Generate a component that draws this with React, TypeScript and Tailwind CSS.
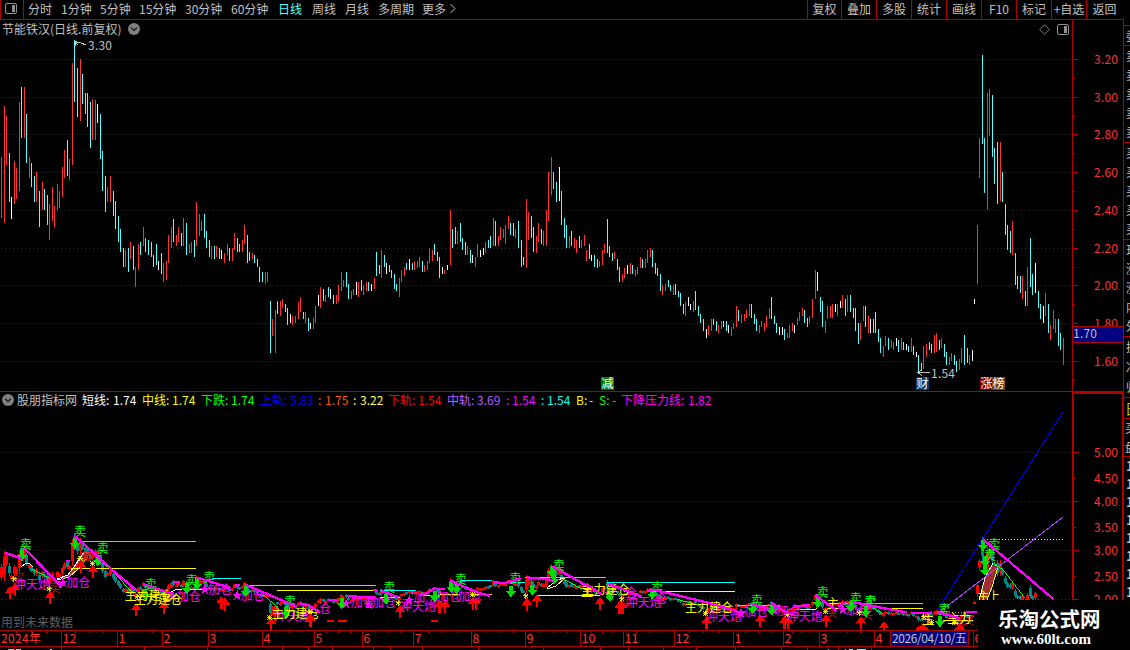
import React from "react";

type Tone = "r" | "c" | "w";
type Bar = { x: number; top: number; bottom: number; tone: Tone };

/* Each record is "x top bottom tone", in thirds of a pixel from the block's origin. */
function readBars(originX: number, originY: number, source: string): Bar[] {
  return source
    .trim()
    .split(",")
    .map((record) => {
      const [x, top, bottom, tone] = record.trim().split(/\s+/);
      return {
        x: originX + Math.floor(Number(x) / 3),
        top: originY + Math.round(Number(top) / 3),
        bottom: originY + Math.round(Number(bottom) / 3),
        tone: tone as Tone,
      };
    });
}

const bars: Bar[] = [
  ...readBars(
    0,
    0,
    `4 471 653 r,13 318 668 r,19 348 495 r,28 459 606 c,34 591 657 w,43 483 612 r,49 504 597 r,58 306 573 r,64 261 414 c,73 261 414 r,79 342 489 c,88 471 534 r,94 489 561 c,103 528 606 c,109 516 606 r,118 573 681 c,127 546 630 r,133 567 630 c,142 585 675 c,148 612 720 r,157 561 662 r,163 618 681 r,172 552 630 r,178 573 624 r,187 501 591 r,193 450 534 r,202 420 528 c,208 477 540 r,217 189 495 r,223 120 306 c,232 204 351 c,241 177 363 r,247 222 312 c,256 279 342 c,262 279 381 c,271 306 444 c,277 297 420 r,286 300 420 r,292 312 369 w,301 342 477 c,307 453 573 c,316 528 636 c,322 561 606 r,331 528 606 r,340 573 648 c,346 603 687 c,355 648 726 c`
  ),
  ...readBars(
    0,
    190,
    `361 117 186 c,370 174 231 c,376 180 231 r,385 174 246 c,391 156 207 r,400 168 240 c,406 231 291 r,415 162 240 r,421 156 195 c,430 111 168 r,436 144 186 c,445 150 195 c,454 156 201 c,460 195 231 c,469 162 225 c,475 213 240 w,484 189 252 c,490 219 276 r,499 213 270 r,505 135 219 r,514 110 174 r,520 87 156 c,529 135 168 r,535 111 156 r,544 129 168 c,550 84 168 r,559 99 195 c,568 162 189 r,574 156 189 r,583 150 201 c,589 36 168 r,598 72 138 r,604 93 123 r,613 72 144 c,619 123 174 c,628 150 201 c,634 168 207 r,643 168 207 c,649 168 201 r,658 174 207 c,664 180 207 w,673 189 219 r,682 162 195 r,688 174 213 c,697 174 213 r,703 129 180 r,712 144 186 c,718 162 186 c,727 150 186 r,733 105 162 r,742 135 219 c,748 186 213 c,757 189 207 r,763 195 219 c,772 207 231 c,778 231 276 c,787 246 276 c,796 246 282 r,802 246 276 r,811 333 489 c,817 387 438 r,826 360 489 r,832 333 372 c,841 333 378 r,847 327 354 r,856 342 366 c,862 354 405 c,871 372 399 w,877 378 405 r,886 378 399 r,895 336 387 r,901 321 366 r,910 366 387 c,916 366 399 r,925 384 423 c,931 399 417 w,940 384 417 r,946 348 399 r,955 315 348 w,961 291 354 r,970 297 333 c,976 315 336 r,985 291 321 c,991 297 327 w,1000 315 342 c,1009 315 342 r,1015 285 336 r,1024 246 303 r,1030 270 291 r,1039 246 291 c,1045 282 327 c,1054 303 327 r,1060 297 315 r,1069 276 315 w,1075 276 321 r,1084 270 303 c,1090 285 315 r,1099 276 303 r,1105 276 303 c`
  ),
  ...readBars(
    370,
    190,
    `4 282 303 w,13 264 297 r,19 186 258 c,28 225 252 c,34 180 264 r,43 195 231 c,49 219 252 w,58 225 246 c,64 240 264 c,73 252 297 c,79 282 303 c,88 264 321 r,94 240 276 r,103 231 258 r,109 219 240 c,118 207 240 w,127 219 240 c,133 213 240 r,142 213 234 r,148 201 231 r,157 213 246 c,163 225 246 r,172 213 240 r,178 174 219 r,187 180 213 r,193 162 195 c,202 186 213 c,208 201 264 c,217 231 252 w,223 240 252 r,232 225 240 w,241 60 225 r,247 117 174 c,256 111 162 c,262 123 162 r,271 99 156 c,277 144 180 c,286 156 195 c,292 168 195 r,301 180 219 c,307 195 219 w,316 201 231 r,322 162 201 r,331 180 201 w,340 174 195 w,346 156 189 r,355 150 174 c,361 138 174 c,370 84 168 r,376 93 168 c,385 138 168 r,391 111 150 r,400 117 144 r,406 105 162 r,415 78 117 r,421 99 135 c,430 99 138 c,436 117 144 r,445 93 174 c,454 150 231 c,460 201 225 c,469 27 234 r,475 66 150 r,484 78 144 c,490 111 186 c,499 138 189 r,505 99 156 r,514 117 162 c,520 123 168 r,529 60 168 r,535 -54 93 r,544 -99 15 r,550 -54 -3 c,559 -24 36 c,568 -69 33 w,574 3 105 c,583 84 144 c,589 105 174 c,598 138 174 r,604 123 168 c,613 144 174 r,619 150 189 r,628 138 174 c,634 150 174 r,643 135 168 r,649 180 213 r,658 162 207 c,664 195 213 w,673 195 231 c,682 207 234 c,688 213 231 r,697 180 225 r,703 162 189 r,712 87 189 c,718 168 201 c,727 189 213 c,733 186 207 r,742 207 240 c,748 231 276 c,757 252 276 r,763 234 264 r,772 225 252 w,781 219 252 r,787 225 252 c,796 240 258 r,802 231 252 r,811 201 234 r,817 207 234 c,826 207 234 r,832 180 219 r,841 174 201 r,847 180 231 c,856 219 252 c,862 234 258 c,871 252 303 c,877 285 315 r,886 282 303 r,895 270 291 c,901 285 303 c,910 285 315 r,916 282 315 c,925 303 321 c,931 309 348 c,940 342 372 c,946 336 378 r,955 321 348 w,961 342 360 w,970 333 366 r,976 303 360 c,985 348 378 c,991 372 399 c,1000 387 423 c,1009 417 444 w,1015 405 435 r,1024 387 423 r,1030 387 405 c,1039 393 423 c,1045 405 429 r,1054 393 417 r,1060 393 411 c,1069 393 423 c,1075 405 429 w,1084 411 438 r,1090 399 417 r,1099 348 411 r,1105 360 393 c,1114 372 399 r,1123 372 393 r,1129 360 384 r,1138 342 378 r`
  ),
  ...readBars(
    750,
    190,
    `4 342 384 c,13 372 402 c,19 387 423 c,28 405 429 r,34 393 411 r,43 399 423 r,49 378 411 r,58 354 387 r,64 321 387 c,73 378 402 c,79 399 429 c,88 411 435 w,97 411 435 w,103 417 450 c,112 429 444 r,118 405 444 r,127 399 423 r,133 405 429 w,142 384 405 r,148 366 393 r,157 354 378 r,163 360 399 c,172 384 411 c,178 378 399 r,187 327 384 r,196 240 327 r,202 246 303 w,211 321 366 c,217 333 411 c,226 393 429 r,232 348 387 r,241 348 384 r,247 342 384 r,256 342 366 w,262 342 378 r,271 333 354 w,277 315 354 r,286 327 378 c,292 315 366 r,301 315 366 c,310 354 384 c,316 354 423 c,325 399 462 c,331 399 450 r,340 348 393 r,346 348 411 c,355 378 429 r,361 387 429 w,370 387 429 c,376 366 429 c,385 417 456 c,391 444 489 c,400 468 501 r,406 438 468 r,415 444 480 c,424 450 474 r,430 456 480 r,439 444 468 w,445 450 486 c,454 444 480 r,460 456 480 c,469 462 480 w,475 468 486 c,484 444 486 r,490 468 495 c,499 486 501 w,505 495 549 c,514 519 543 c,520 468 537 r,529 462 501 r,538 456 480 c,544 462 489 c,553 435 489 r,559 429 486 r,568 450 480 c,574 444 474 r,583 462 501 c,589 486 525 c,598 501 525 r,604 489 513 r,613 495 525 c,619 513 546 c,628 507 540 r,634 474 519 r,643 435 525 c,652 474 519 c,658 495 525 r,667 480 513 w,673 327 342 w,682 105 282 r,688 -156 -36 r,697 -405 -138 c,703 -156 9 c,712 -291 60 r,718 -303 -162 r,727 -285 -99 c,733 -126 -18 c,742 -144 42 c,751 -144 33 r,757 -54 36 c,766 42 135 c,772 105 180 c,781 123 189 c,787 93 195 r,796 189 285 c,802 258 297 c,811 258 309 c,817 258 327 r,826 303 348 c,832 231 348 r,841 144 291 c,847 252 315 c,856 219 309 w,865 303 354 c,871 342 387 c,880 348 399 w,886 309 378 r,895 342 429 c,901 405 450 r,910 360 417 r,916 387 429 r,925 387 468 c,931 429 480 c,940 444 525 r`
  ),
];

const barColor: Record<Tone, string> = { r: "#ff3232", c: "#54ffff", w: "#ffffff" };
const candleColor: Record<Tone, string> = { r: "#ff0000", c: "#008888", w: "#ff0000" };

/* The indicator pane draws the same prices on its own, flatter scale. */
const toIndicatorY = (y: number) => 538.5 + (y - 59.5) * 0.262;

const LINE = "#b00000";
const MAGENTA = "#ff00ff";
const YELLOW = "#ffff00";
const CYAN = "#00ffff";
const GREEN = "#00ff00";

const upperGrid = [59, 97, 134, 172, 210, 248, 285, 323, 361];
const upperLabels = ["3.20", "3.00", "2.80", "2.60", "2.40", "2.20", "2.00", "1.80", "1.60"];
const lowerGrid = [452, 501, 550, 599];
const lowerLabels: [string, number][] = [
  ["5.00", 452],
  ["4.50", 478],
  ["4.00", 501],
  ["3.50", 527],
  ["3.00", 550],
  ["2.50", 576],
  ["2.00", 599],
];

type Mark = [string, number, number];
type Segment = {
  originX: number;
  magenta: string[];
  cyan: string[];
  yellow: string[];
  green?: string[];
  sell: [number, number][];
  down: [number, number][];
  up: [number, number][];
  buy?: [number, number][];
  sparks?: [number, number][];
  stars?: [number, number][];
  pink: Mark[];
  gold: Mark[];
};

const segments: Segment[] = [
  {
    originX: 0,
    magenta: ["14,113 66,131", "74,100 186,218", "200,140 209,137", "224,62 340,168 412,228", "432,208 520,237", "520,202 540,200", "592,188 690,218", "705,212 720,210", "734,208 890,275"],
    cyan: ["246,79 588,79", "636,190 723,190", "735,211 900,211"],
    yellow: ["214,160 588,160", "560,223 610,223", "830,226 900,226"],
    green: ["96,162 150,190", "290,135 330,160 390,225", "790,240 835,278"],
    sell: [[77, 90], [240, 50], [308, 103], [452, 210], [575, 198], [628, 188], [870, 260]],
    down: [[66, 122], [225, 86], [293, 136], [436, 238], [560, 220], [592, 208], [737, 230], [857, 292]],
    up: [[30, 215], [45, 205], [150, 230], [243, 138], [279, 152], [408, 266], [492, 260], [664, 246], [675, 250], [813, 309], [825, 282]],
    buy: [[55, 192], [165, 222], [260, 128]],
    sparks: [[42, 192], [148, 222], [240, 130], [277, 145], [414, 244], [808, 308]],
    stars: [[188, 202], [519, 243], [614, 222], [712, 240]],
    pink: [["冲天炮", 42, 210], ["加仓", 199, 203], ["加仓", 530, 245], ["加仓", 625, 224], ["加仓", 722, 242], ["冲天炮", 825, 306]],
    gold: [["主力建仓", 374, 242], ["主力建仓", 402, 256], ["主力建仓", 815, 296]],
  },
  {
    originX: 290,
    magenta: ["30,265 55,270 90,292", "115,255 145,255", "170,243 250,248", "250,225 262,224", "275,228 325,247", "362,231 372,230", "388,242 410,235 430,222 465,222", "480,197 570,235 600,242", "610,202 645,204 692,190", "710,187 790,195", "787,155 830,178 900,218"],
    cyan: ["0,211 258,211", "270,226 378,226", "510,196 606,196", "610,202 705,202", "705,187 900,187"],
    yellow: ["0,226 260,226", "270,247 330,247", "390,242 510,238", "555,238 606,238", "740,241 900,241"],
    green: ["820,192 845,205 875,222"],
    sell: [[298, 218], [512, 196], [676, 192], [806, 152]],
    down: [[155, 265], [288, 252], [484, 217], [500, 220], [663, 230], [727, 225], [786, 170], [793, 192], [435, 245]],
    up: [[62, 298], [330, 272], [449, 256], [465, 256], [549, 248], [558, 248], [711, 250], [741, 240]],
    buy: [[340, 268], [720, 208]],
    sparks: [[325, 264], [548, 238], [707, 243], [60, 290]],
    stars: [[168, 265], [236, 267], [358, 255], [432, 243]],
    pink: [["仓", 88, 283], ["加仓", 182, 264], ["加仓", 246, 264], ["冲天炮", 330, 275], ["加", 370, 250], ["加仓", 440, 245], ["加仓", 505, 245]],
    gold: [["主", 873, 232]],
  },
  {
    originX: 580,
    magenta: ["0,203 30,215 65,238", "82,205 185,245", "200,228 225,225 380,262 470,288", "515,268 570,282", "573,262 610,288 640,300", "640,275 690,270", "706,240 770,288", "775,275 795,262", "820,262 900,277"],
    cyan: ["0,187 78,187", "80,202 465,202", "470,271 600,271", "735,265 900,265"],
    yellow: ["0,241 60,241", "215,229 465,229", "640,284 710,282"],
    green: ["290,252 350,270"],
    sell: [[232, 218], [530, 257], [728, 234], [827, 252], [872, 262]],
    down: [[90, 243], [217, 237], [518, 280], [575, 285], [713, 262], [812, 275], [858, 290]],
    up: [[60, 248], [119, 260], [127, 260], [380, 305], [540, 300], [614, 304], [624, 304], [738, 300], [843, 305]],
    buy: [[140, 262], [755, 292], [862, 298]],
    sparks: [[125, 252], [376, 296], [622, 298], [736, 290], [838, 294]],
    stars: [[88, 235], [483, 293], [583, 285], [788, 282]],
    pink: [["冲天炮", 137, 265], ["仓", 135, 235], ["仓", 226, 252], ["冲天炮", 378, 307], ["加仓", 493, 291], ["加仓", 590, 288], ["冲天炮", 620, 307], ["加仓", 798, 285]],
    gold: [["主力建仓", 5, 225], ["主力建仓", 315, 278], ["主", 740, 268]],
  },
  {
    originX: 860,
    magenta: ["0,266 35,273 140,292", "155,294 215,293", "232,291 300,310", "318,291 352,291", "368,72 580,252"],
    cyan: ["15,265 189,265", "260,301 340,301"],
    yellow: ["60,281 189,281", "250,318 340,318"],
    green: ["400,145 430,165 495,250", "40,280 70,296"],
    sell: [[30, 262], [253, 286], [403, 90], [390, 122]],
    down: [[369, 92], [375, 166], [375, 140], [240, 320]],
    up: [[72, 320], [190, 325], [176, 334], [300, 325], [292, 334]],
    buy: [[205, 318], [300, 318], [325, 316]],
    sparks: [[192, 306], [215, 322], [285, 322]],
    stars: [],
    pink: [],
    gold: [["主", 186, 316], ["主力", 262, 312], ["主", 352, 246], ["上", 384, 246]],
  },
];

function Overlay({ segment }: { segment: Segment }) {
  const { originX } = segment;
  return (
    <g transform={`translate(${originX} 515) scale(0.33333)`} fontSize="36">
      {segment.cyan.map((p) => (
        <polyline key={p} points={p} fill="none" stroke={CYAN} strokeWidth="3" />
      ))}
      {segment.yellow.map((p) => (
        <polyline key={p} points={p} fill="none" stroke={YELLOW} strokeWidth="3" />
      ))}
      {(segment.green ?? []).map((p) => (
        <polyline key={p} points={p} fill="none" stroke={GREEN} strokeWidth="3" />
      ))}
      {segment.up.map(([x, y]) => (
        <path key={`${x}-${y}`} d={`M${x} ${y - 2}l16 21h-12v18h-8v-18h-12z`} fill="#ff0000" />
      ))}
      {(segment.buy ?? []).map(([x, y]) => (
        <text key={`${x}-${y}`} x={x - 18} y={y + 13} fill="#e00000">
          买
        </text>
      ))}
      {segment.pink.map(([t, x, y]) => (
        <text key={`${x}-${y}`} x={x} y={y + 12} fill={MAGENTA}>
          {t}
        </text>
      ))}
      {(segment.stars ?? []).map(([x, y]) => (
        <path
          key={`${x}-${y}`}
          d={`M${x} ${y - 15}l4 11h12l-10 8 4 12-10-8-10 8 4-12-10-8h12z`}
          fill={MAGENTA}
        />
      ))}
      {segment.down.map(([x, y]) => (
        <path key={`${x}-${y}`} d={`M${x} ${y + 17}l-15-18h9v-15h12v15h9z`} fill="#00dc00" />
      ))}
      {segment.sell.map(([x, y]) => (
        <text key={`${x}-${y}`} x={x - 18} y={y + 12} fill={GREEN}>
          卖
        </text>
      ))}
      {segment.gold.map(([t, x, y]) => (
        <text key={`${x}-${y}`} x={x} y={y + 12} fill={YELLOW}>
          {t}
        </text>
      ))}
      {(segment.sparks ?? []).map(([x, y]) => (
        <path
          key={`${x}-${y}`}
          d={`M${x - 8} ${y}h16M${x} ${y - 8}v16M${x - 7} ${y - 7}l14 14M${x + 7} ${y - 7}l-14 14`}
          stroke={YELLOW}
          strokeWidth="2.5"
        />
      ))}
      {segment.magenta.map((p) => (
        <polyline key={p} points={p} fill="none" stroke={MAGENTA} strokeWidth="7" />
      ))}
    </g>
  );
}

function RoundChevron() {
  return (
    <svg width="12" height="12" viewBox="0 0 12 12" className="shrink-0">
      <circle cx="6" cy="6" r="6" fill="#808080" />
      <path d="M3 4.5l3 3 3-3" fill="none" stroke="#202020" strokeWidth="1.4" />
    </svg>
  );
}

function PanelIcon() {
  return (
    <svg width="12" height="11" viewBox="0 0 12 11" className="shrink-0">
      <rect x="0.5" y="0.5" width="11" height="10" rx="1.5" fill="none" stroke="#909090" />
      <rect x="7" y="2" width="3" height="7" fill="#909090" />
    </svg>
  );
}

function Toolbar() {
  return (
    <div className="flex h-5 shrink-0 border-b border-[#b00000] text-[#c0c0c0]">
      <div className="flex w-6 items-center border-x border-[#b00000] pb-0.5 pl-1">
        <PanelIcon />
      </div>
      <div className="flex flex-1 items-center pb-0.5 pl-1 whitespace-nowrap">
        <span className="w-[33px]">分时</span>
        <span className="w-[39px]">1分钟</span>
        <span className="w-[39px]">5分钟</span>
        <span className="w-[46px]">15分钟</span>
        <span className="w-[46px]">30分钟</span>
        <span className="w-[47px]">60分钟</span>
        <span className="w-[34px] text-[#54ffff]">日线</span>
        <span className="w-[33px]">周线</span>
        <span className="w-[33px]">月线</span>
        <span className="w-[44px]">多周期</span>
        <span className="w-[28px]">更多</span>
        <svg width="6" height="11" viewBox="0 0 6 11">
          <path d="M.5 1l4.500 4.500-4.500 4.500" fill="none" stroke="#c0c0c0" />
        </svg>
      </div>
      <div className="flex whitespace-nowrap">
        <div className="flex w-[34px] items-center justify-center border-l border-[#b00000] pb-0.5">复权</div>
        <div className="flex w-[35px] items-center justify-center border-l border-[#b00000] pb-0.5">叠加</div>
        <div className="flex w-[35px] items-center justify-center border-l border-[#b00000] pb-0.5">多股</div>
        <div className="flex w-[35px] items-center justify-center border-l border-[#b00000] pb-0.5">统计</div>
        <div className="flex w-[35px] items-center justify-center border-l border-[#b00000] pb-0.5">画线</div>
        <div className="flex w-[35px] items-center justify-center border-l border-[#b00000] pb-0.5">F10</div>
        <div className="flex w-[35px] items-center justify-center border-l border-[#b00000] pb-0.5">标记</div>
        <div className="flex w-[35px] items-center justify-center border-l border-[#b00000] pb-0.5">+自选</div>
        <div className="flex w-[38px] items-center justify-center border-l border-[#b00000] pr-0.5 pb-0.5">返回</div>
      </div>
    </div>
  );
}

function Badge({ x, fill, label }: { x: number; fill: string; label: string }) {
  return (
    <g>
      <rect x={x} y="377" width="13" height="13" fill={fill} />
      <text x={x + 0.5} y="388" fontSize="12" fill="#fff">
        {label}
      </text>
    </g>
  );
}

function PricePane() {
  return (
    <div className="relative h-[371px] shrink-0">
      <svg width="1124" height="371" viewBox="0 20 1124 371" shapeRendering="crispEdges" fontSize="12">
        {upperGrid.map((y) => (
          <line key={y} x1="1" x2="1072" y1={y + 0.5} y2={y + 0.5} stroke="#a00000" strokeDasharray="1 3" />
        ))}
        {bars.map((b, i) => (
          <rect key={i} x={b.x} y={b.top} width="1" height={b.bottom - b.top} fill={barColor[b.tone]} />
        ))}
        <path d="M1072.5 20V391M1123.5 20V391" stroke={LINE} />
        {upperGrid.map((y, i) => (
          <g key={y}>
            <path d={`M1073 ${y + 0.5}h5M1073 ${y + 19.5}h2`} stroke={LINE} />
            <text x="1094" y={y + 5} fill="#ff3232" textLength="24">
              {upperLabels[i]}
            </text>
          </g>
        ))}
        <rect x="1073" y="326" width="50" height="17" fill="#000080" />
        <path d="M1072 326.5h51M1072 342.5h51" stroke={LINE} />
        <text x="1073" y="338" fill="#c0c0c0" textLength="24">
          1.70
        </text>
        <path d="M75 46V41.5H77M76 42l5 1 5 2M75 42l3 3" fill="none" stroke="#c0c0c0" />
        <text x="88" y="50" fill="#c0c0c0" textLength="24">
          3.30
        </text>
        <path d="M918 372.5H930M922 369l-4 3.500 4 3.500" fill="none" stroke="#c0c0c0" />
        <text x="931" y="378" fill="#c0c0c0" textLength="24">
          1.54
        </text>
        <Badge x={601} fill="#008000" label="减" />
        <Badge x={916} fill="#003c78" label="财" />
        <Badge x={980} fill="#800000" label="涨" />
        <Badge x={992} fill="#804000" label="榜" />
      </svg>
      <div className="absolute inset-x-0 top-0 flex h-[18px] items-center pl-0.5 text-[#c0c0c0]">
        <span className="w-[126px] whitespace-nowrap">节能铁汉(日线.前复权)</span>
        <RoundChevron />
        <div className="flex flex-1 items-center justify-end gap-[7px] pr-[55px]">
          <svg width="11" height="11" viewBox="0 0 11 11">
            <path d="M5.500 .7l4.800 4.800-4.800 4.800L.7 5.500z" fill="none" stroke="#808080" />
          </svg>
          <PanelIcon />
        </div>
      </div>
    </div>
  );
}

function IndicatorLegend() {
  return (
    <div className="flex h-[17px] items-center pl-0.5 whitespace-nowrap text-white">
      <div className="flex w-[15px]">
        <RoundChevron />
      </div>
      <span className="w-[65px] text-[#c0c0c0]">股朋指标网</span>
      <span className="w-[31px]">短线:</span>
      <span className="w-[29px]">1.74</span>
      <span className="w-[30px] text-[#ffff00]">中线:</span>
      <span className="w-[29px] text-[#ffff00]">1.74</span>
      <span className="w-[30px] text-[#00ff00]">下跌:</span>
      <span className="w-[29px] text-[#00ff00]">1.74</span>
      <span className="w-[30px] text-[#0000ff]">上轨:</span>
      <span className="w-[28px] text-[#0000ff]">5.83</span>
      <span className="w-[7px] text-[#ff5a00]">:</span>
      <span className="w-[28px] text-[#ff5a00]">1.75</span>
      <span className="w-[7px] text-[#ffff54]">:</span>
      <span className="w-[28px] text-[#ffff54]">3.22</span>
      <span className="w-[30px] text-[#ff0000]">下轨:</span>
      <span className="w-[29px] text-[#ff0000]">1.54</span>
      <span className="w-[30px] text-[#b060ff]">中轨:</span>
      <span className="w-[29px] text-[#b060ff]">3.69</span>
      <span className="w-[6px] text-[#ff00ff]">:</span>
      <span className="w-[29px] text-[#ff00ff]">1.54</span>
      <span className="w-[6px] text-[#00ffff]">:</span>
      <span className="w-[29px] text-[#00ffff]">1.54</span>
      <span className="w-[13px] text-[#ffff00]">B:</span>
      <span className="w-[10px] text-[#ffff00]">-</span>
      <span className="w-[13px] text-[#00ff00]">S:</span>
      <span className="w-[9px] text-[#00ff00]">-</span>
      <span className="w-[67px] text-[#ff00ff]">下降压力线:</span>
      <span className="text-[#ff00ff]">1.82</span>
    </div>
  );
}

function IndicatorPane() {
  return (
    <div className="relative h-[239px] shrink-0">
      <svg width="1124" height="239" viewBox="0 391 1124 239" shapeRendering="crispEdges" fontSize="12">
        <path d="M0 391.5H1124" stroke={LINE} />
        {lowerGrid.map((y) => (
          <line key={y} x1="1" x2="1072" y1={y + 0.5} y2={y + 0.5} stroke="#a00000" strokeDasharray="1 3" />
        ))}
        {bars.map((b, i) => {
          const top = toIndicatorY(b.top);
          const height = Math.max(3, (b.bottom - b.top) * 0.262);
          return (
            <g key={i} fill={candleColor[b.tone]}>
              <rect x={b.x} y={top} width="1" height={height} />
              <rect x={b.x - 1} y={top + height * 0.2} width="3" height={Math.max(2, height * 0.6)} />
            </g>
          );
        })}
        <path d="M57 579l11-4 8-11 8-12h6l-2 5-10 12-9 8z" fill="#a03030" />
        <path d="M57 579l11-4 8-11 8-12h6" fill="none" stroke="#fff" />
        <path d="M57 580l12-3 9-8 10-12" fill="none" stroke={YELLOW} />
        <path d="M21 567l4-3 4-1 4 4" fill="none" stroke="#fff" />
        <path d="M171 592l6-3 5 1M547 588l10-8 7-2" fill="none" stroke="#fff" />
        <path d="M547 589l9-3 9-8" fill="none" stroke={YELLOW} />
        <path d="M979 600l6-22 8-15 5 4-6 20-5 13z" fill="#a03030" />
        <path d="M979 600l6-22 8-15 5 4" fill="none" stroke="#fff" />
        <path d="M998 567l-6 20-5 13" fill="none" stroke={YELLOW} />
        <path d="M937 611L1063 412" stroke="#0000ff" />
        <path d="M937 614L1063 517" stroke="#b040ff" />
        <path d="M984 539.5H1064" stroke="#ffff54" strokeDasharray="1 2" />
        <path d="M940 612.5H967" stroke="#ff8040" strokeDasharray="1 2" />
        <path d="M327 621h7M338 621h9M431 621h7" stroke="#ff0000" strokeWidth="2" />
        <text x="1" y="627" fill="#606060">
          用到未来数据
        </text>
        {segments.map((s) => (
          <Overlay key={s.originX} segment={s} />
        ))}
        <path d="M1073 630V393H1123V630" fill="none" stroke={LINE} strokeWidth="2" />
        {lowerLabels.map(([label, y], i) => (
          <g key={label}>
            <path d={i % 2 ? `M1074 ${y + 0.5}h2` : `M1074 ${y + 0.5}h5`} stroke={LINE} />
            <text x="1094" y={y + 5} fill="#ff3232" textLength="24">
              {label}
            </text>
          </g>
        ))}
      </svg>
      <div className="absolute inset-x-0 top-0">
        <IndicatorLegend />
      </div>
    </div>
  );
}

const months: [string, number][] = [
  ["12", 61],
  ["1", 117],
  ["2", 162],
  ["3", 208],
  ["4", 262],
  ["5", 314],
  ["6", 362],
  ["7", 413],
  ["8", 471],
  ["9", 525],
  ["10", 580],
  ["11", 623],
  ["12", 674],
  ["1", 733],
  ["2", 783],
  ["3", 819],
  ["4", 874],
  ["6", 973],
];
const minorTicks = [16, 31, 46, 75, 89, 103, 129, 141, 152, 173, 185, 197, 221, 235, 249, 275, 288, 301, 326, 338, 350, 375, 388, 400, 428, 442, 457, 485, 499, 512, 539, 553, 567, 591, 602, 612, 636, 649, 661, 689, 703, 718, 745, 758, 771, 792, 801, 810, 833, 847, 860];
const footTicks = [14, 61, 144, 207, 282, 308, 332, 373, 390, 422, 478, 543, 600, 628, 663, 696, 735, 781, 807, 838, 871];

function TimeAxis() {
  return (
    <svg width="1124" height="20" viewBox="0 630 1124 20" shapeRendering="crispEdges" fontSize="12">
      <path d="M0 630.5H1124M0 646.5H1124" stroke={LINE} />
      {minorTicks.map((x) => (
        <path key={x} d={`M${x + 0.5} 631v2`} stroke={LINE} />
      ))}
      {footTicks.map((x) => (
        <path key={x} d={`M${x + 0.5} 647v3`} stroke={LINE} />
      ))}
      <text x="1" y="643" fill="#ff3232" textLength="40">
        2024年
      </text>
      {months.map(([label, x]) => (
        <g key={x}>
          <path d={`M${x + 0.5} 631V646`} stroke={LINE} />
          <text x={x + 1.5} y="643" fill="#ff3232" fontSize="12.5">
            {label}
          </text>
        </g>
      ))}
      <rect x="890.5" y="630.5" width="78" height="16" fill="#000080" stroke={LINE} />
      <text x="892" y="643" fill="#c0c0c0" textLength="75">
        2026/04/10/五
      </text>
      <path d="M8 649.500h6M16 649.500h5M50 649.500h2M828 649.500h1" stroke="#c0c0c0" />
      <path d="M845 649.500h1M849 649.500h4M857 649.500h9" stroke="#54ffff" />
    </svg>
  );
}

function QuoteStrip() {
  return (
    <div className="flex w-1.5 shrink-0 flex-col overflow-hidden text-[#c0c0c0]">
      <div className="h-[25px] shrink-0" />
      <div className="flex h-5 shrink-0 items-center border-t border-[#b00000] pl-0.5">委</div>
      {["卖卖卖卖卖", "买买买买买", "现涨涨内外"].map((group) => (
        <div key={group} className="flex h-[97px] shrink-0 flex-col justify-around border-t border-[#b00000] pl-0.5 leading-4">
          {group.split("").map((c, i) => (
            <span key={i} className="w-3">
              {c}
            </span>
          ))}
        </div>
      ))}
      <div className="flex h-[61px] shrink-0 flex-col justify-around border-t border-[#b00000] pl-0.5 leading-4">
        <span className="w-3">换</span>
        <span className="w-3">净</span>
        <span className="w-3">归</span>
      </div>
      <div className="flex h-[21px] shrink-0 items-center border-t border-[#b00000] pl-px text-[14px] text-[#c8c800]">日</div>
      <div className="flex h-[38px] shrink-0 flex-col justify-around border-t border-[#b00000] pl-px leading-4">
        <span className="w-3">买</span>
        <span className="w-3">盘</span>
      </div>
      <div className="flex flex-col border-t border-[#b00000] pl-0.5 text-[13px] leading-[18px] font-bold">
        {[0, 1, 2, 3, 4, 5, 6, 7].map((i) => (
          <span key={i}>1</span>
        ))}
      </div>
    </div>
  );
}

export default function App() {
  return (
    <div className="relative flex h-[650px] w-[1130px] overflow-hidden bg-black font-['Noto_Sans_CJK_SC',sans-serif] text-[12px] leading-[16px]">
      <div className="flex w-[1124px] shrink-0 flex-col">
        <Toolbar />
        <PricePane />
        <IndicatorPane />
        <TimeAxis />
      </div>
      <QuoteStrip />
      <div className="absolute right-0 bottom-0 flex h-[50px] w-[152px] flex-col items-start bg-black pt-[6px] pl-5 text-white">
        <span className="text-[20.5px] leading-[24px] font-bold whitespace-nowrap">乐淘公式网</span>
        <span className="pl-[3px] font-['Liberation_Serif',serif] text-[15px] leading-[18px] font-bold">www.60lt.com</span>
      </div>
    </div>
  );
}
